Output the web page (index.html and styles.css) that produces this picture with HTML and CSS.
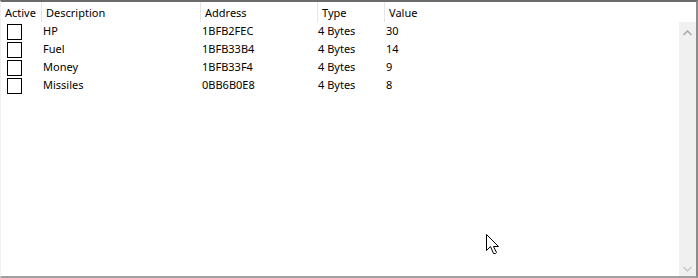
FILE: index.html
```html
<!DOCTYPE html>
<html>
<head>
<meta charset="utf-8">
<link rel="stylesheet" href="styles.css">
</head>
<body>
<div class="frame">
  <div class="main">
    <div class="header">
      <div class="hcell c-active">Active</div>
      <div class="hcell c-desc">Description</div>
      <div class="hcell c-addr">Address</div>
      <div class="hcell c-type">Type</div>
      <div class="hcell c-val">Value</div>
    </div>
    <div class="body">
      <div class="list">
        <div class="row"><div class="c-active"><span class="box"></span></div><div class="c-desc">HP</div><div class="c-addr">1BFB2FEC</div><div class="c-type">4 Bytes</div><div class="c-val">30</div></div>
        <div class="row"><div class="c-active"><span class="box"></span></div><div class="c-desc">Fuel</div><div class="c-addr">1BFB33B4</div><div class="c-type">4 Bytes</div><div class="c-val">14</div></div>
        <div class="row"><div class="c-active"><span class="box"></span></div><div class="c-desc">Money</div><div class="c-addr">1BFB33F4</div><div class="c-type">4 Bytes</div><div class="c-val">9</div></div>
        <div class="row"><div class="c-active"><span class="box"></span></div><div class="c-desc">Missiles</div><div class="c-addr">0BB6B0E8</div><div class="c-type">4 Bytes</div><div class="c-val">8</div></div>
      </div>
      <div class="scrollbar">
        <svg class="arrow" width="9" height="6" viewBox="0 0 9 6"><path d="M0.5 5 L4.5 1 L8.5 5" fill="none" stroke="#a6a6a6" stroke-width="1.5"/></svg>
        <svg class="arrow" width="9" height="6" viewBox="0 0 9 6"><path d="M0.5 1 L4.5 5 L8.5 1" fill="none" stroke="#c8c8c8" stroke-width="1.5"/></svg>
      </div>
    </div>
  </div>
  <svg class="cursor" width="13" height="21" viewBox="0 0 13 21">
    <path d="M0.5 0.5 L0.5 16.5 L4.5 12.5 L7.5 19.5 L9.5 19.5 L10.5 18.5 L7.5 12.5 L12.5 12.5 Z" fill="#fff" stroke="#000" stroke-width="1"/>
  </svg>
</div>
</body>
</html>
```
FILE: styles.css
```css
*, *::before, *::after { box-sizing: border-box; }
html, body {
  margin: 0;
  padding: 0;
  background: #fff;
}
body {
  width: 698px;
  height: 278px;
  overflow: hidden;
  font-family: "Noto Sans", "Open Sans", sans-serif;
  font-size: 11px;
  color: #000;
}
.frame {
  position: relative;
  width: 698px;
  height: 278px;
  border-top: 2px solid #6b6b6b;
  border-right: 2px solid #8c8c8c;
  border-bottom: 2px solid #a0a0a0;
  border-left: 1px solid #f0f0f0;
}
.main {
  display: flex;
  flex-direction: column;
  height: 100%;
}
.header {
  display: flex;
  height: 20px;
  flex: none;
  background: #fff;
}
.hcell {
  border-right: 1px solid #e5e5e5;
  padding-left: 4px;
  line-height: 21px;
  white-space: nowrap;
  overflow: hidden;
}
.c-active { width: 41px; flex: none; }
.c-desc { width: 159px; flex: none; }
.c-addr { width: 117px; flex: none; }
.c-type { width: 67px; flex: none; }
.c-val { width: 80px; flex: none; }
.hcell.c-val { border-right: none; }
.body {
  flex: 1;
  display: flex;
}
.list {
  flex: 1;
  padding-top: 1px;
}
.row {
  display: flex;
  height: 18px;
  line-height: 16px;
  white-space: nowrap;
}
.row .c-active {
  display: flex;
  align-items: center;
  padding-left: 6px;
}
.row .c-desc { padding-left: 1px; }
.row .c-addr { padding-left: 1px; }
.row .c-type { padding-left: 0px; }
.row .c-val { padding-left: 1px; }
.box {
  display: block;
  width: 15px;
  height: 16px;
  border: 1px solid #000;
  background: #fff;
}
.scrollbar {
  width: 17px;
  flex: none;
  background: #f0f0f0;
  display: flex;
  flex-direction: column;
  justify-content: space-between;
  align-items: center;
  padding: 8px 0 4px;
}
.arrow { display: block; }
.cursor {
  position: absolute;
  left: 485px;
  top: 232px;
}
```
